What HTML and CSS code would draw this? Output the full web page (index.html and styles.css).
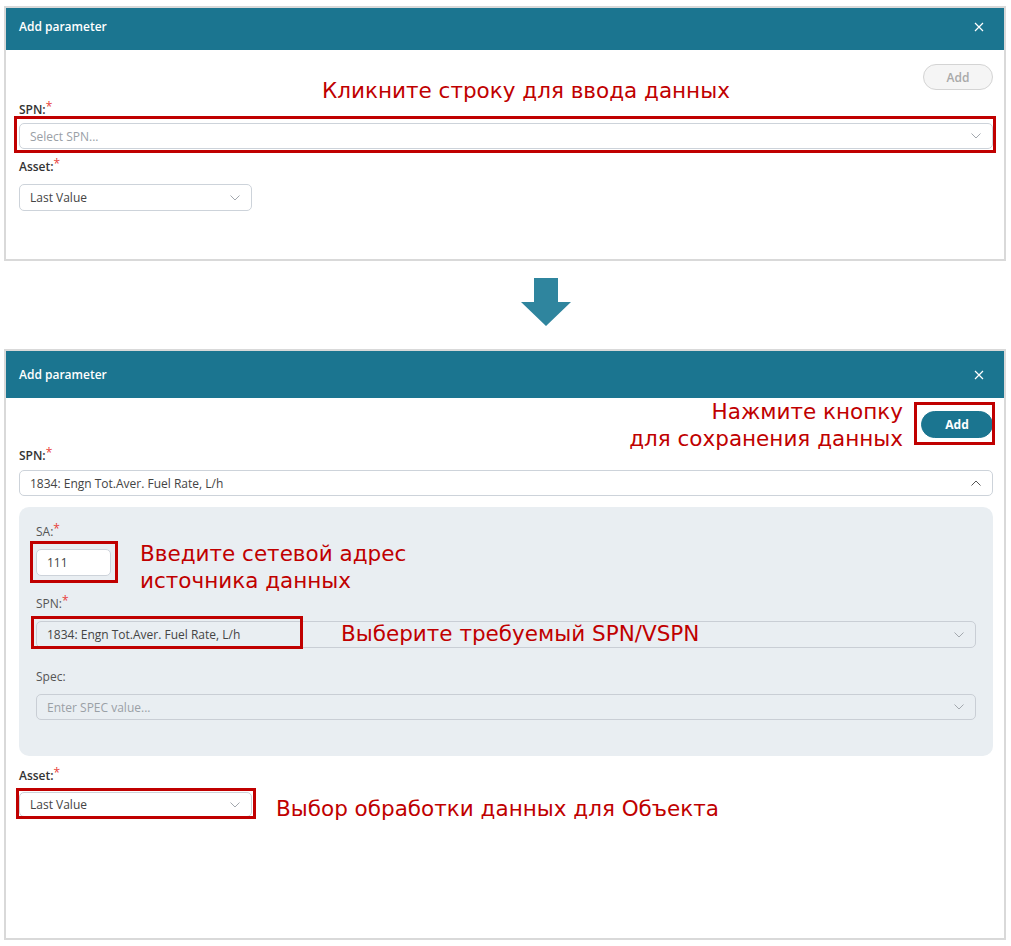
FILE: index.html
```html
<!DOCTYPE html>
<html lang="ru">
<head>
<meta charset="utf-8">
<title>Add parameter</title>
<link rel="stylesheet" href="styles.css">
</head>
<body>
<main class="page">

  <section class="dialog dialog-1">
    <header class="dlg-head dlg-head-1">
      <h2 class="dlg-title">Add parameter</h2>
      <svg class="dlg-close" viewBox="0 0 10 10"><path d="M1 1L9 9M9 1L1 9"/></svg>
    </header>
    <div class="dlg-body dlg-body-1">
      <div class="actions">
        <button class="btn btn-disabled btn-1">Add</button>
      </div>
      <div class="field-label lbl-spn1">SPN:<span class="req">*</span></div>
      <div class="select select-1 mark mark-spn1">
        <span class="placeholder">Select SPN...</span>
        <svg class="chev" viewBox="0 0 10 6"><path d="M0.5 0.5L5 5L9.5 0.5"/></svg>
      </div>
      <div class="field-label lbl-asset1">Asset:<span class="req">*</span></div>
      <div class="select select-asset select-asset1">
        <span class="value">Last Value</span>
        <svg class="chev" viewBox="0 0 10 6"><path d="M0.5 0.5L5 5L9.5 0.5"/></svg>
      </div>
    </div>
    <p class="note note-1">Кликните строку для ввода данных</p>
  </section>

  <div class="flow-arrow">
    <svg class="arrow" viewBox="0 0 50 48"><polygon points="13,0 37,0 37,24 50,24 25,48 0,24 13,24"/></svg>
  </div>

  <section class="dialog dialog-2">
    <header class="dlg-head dlg-head-2">
      <h2 class="dlg-title">Add parameter</h2>
      <svg class="dlg-close" viewBox="0 0 10 10"><path d="M1 1L9 9M9 1L1 9"/></svg>
    </header>
    <div class="dlg-body dlg-body-2">
      <div class="actions">
        <button class="btn btn-primary btn-2 mark mark-add">Add</button>
      </div>
      <div class="field-label lbl-spn2">SPN:<span class="req">*</span></div>
      <div class="select select-2">
        <span class="value">1834: Engn Tot.Aver. Fuel Rate, L/h</span>
        <svg class="chev chev-up" viewBox="0 0 10 6"><path d="M0.5 5.5L5 1L9.5 5.5"/></svg>
      </div>

      <div class="subform">
        <div class="field-label sub-label lbl-sa">SA:<span class="req">*</span></div>
        <div class="input-sa mark mark-sa">111</div>

        <div class="field-label sub-label lbl-sub-spn">SPN:<span class="req">*</span></div>
        <div class="select select-disabled select-sub-spn mark mark-sub-spn">
          <span class="value">1834: Engn Tot.Aver. Fuel Rate, L/h</span>
          <svg class="chev" viewBox="0 0 10 6"><path d="M0.5 0.5L5 5L9.5 0.5"/></svg>
        </div>

        <div class="field-label sub-label lbl-spec">Spec:</div>
        <div class="select select-disabled select-spec">
          <span class="placeholder">Enter SPEC value...</span>
          <svg class="chev" viewBox="0 0 10 6"><path d="M0.5 0.5L5 5L9.5 0.5"/></svg>
        </div>
      </div>

      <div class="field-label lbl-asset2">Asset:<span class="req">*</span></div>
      <div class="select select-asset select-asset2 mark mark-asset">
        <span class="value">Last Value</span>
        <svg class="chev" viewBox="0 0 10 6"><path d="M0.5 0.5L5 5L9.5 0.5"/></svg>
      </div>
    </div>
    <p class="note note-add">Нажмите кнопку<br>для сохранения данных</p>
    <p class="note note-sa">Введите сетевой адрес<br>источника данных</p>
    <p class="note note-spn">Выберите требуемый SPN/VSPN</p>
    <p class="note note-asset">Выбор обработки данных для Объекта</p>
  </section>

</main>
</body>
</html>
```

FILE: styles.css
```css
*, *::before, *::after { box-sizing: border-box; }

html, body {
  margin: 0;
  padding: 0;
  background: #ffffff;
}

body {
  font-family: "Open Sans", "Liberation Sans", Arial, sans-serif;
  font-size: 12px;
  color: #333;
}

.page {
  width: 1011px;
  padding: 6px 5px 0 4px;
}

/* ---------- dialog ---------- */
.dialog {
  position: relative;
  width: 1002px;
  border: 2px solid #d9d9d9;
  background: #fff;
}
.dialog-1 { height: 255px; }
.dialog-2 { height: 591px; }

.dlg-head {
  display: flex;
  align-items: center;
  justify-content: space-between;
  background: #1b7590;
  color: #fff;
  padding: 0 20px 0 13px;
}
.dlg-head-1 { height: 42px; padding-bottom: 5px; }
.dlg-head-2 { height: 47px; }

.dlg-title {
  margin: 0;
  font-size: 12px;
  font-weight: 600;
  line-height: 16px;
}

.dlg-close {
  width: 10px;
  height: 10px;
  fill: none;
  stroke: #fff;
  stroke-width: 1.2;
}

.dlg-body {
  padding: 14px 11px 0 13px;
}
.dlg-body-2 { padding-top: 13px; }

.actions {
  display: flex;
  justify-content: flex-end;
}

.btn {
  font-family: "Open Sans", "Liberation Sans", Arial, sans-serif;
  font-size: 12px;
  border-radius: 14px;
  padding: 0;
  cursor: pointer;
}
.btn-1 { width: 70px; height: 26px; }
.btn-2 { width: 72px; height: 27px; }

.btn-disabled {
  background: #f5f5f5;
  border: 1px solid #d4d4d4;
  color: #a9a9a9;
  font-weight: 600;
}
.btn-primary {
  background: #1b7590;
  border: 1px solid #1b7590;
  color: #fff;
  font-weight: 700;
}

/* ---------- fields ---------- */
.field-label {
  line-height: 16px;
  font-weight: 600;
  color: #333;
}
.sub-label {
  font-weight: 400;
  color: #555;
}
.req {
  color: #e8413a;
  font-weight: 400;
  vertical-align: 3px;
  line-height: 0;
}

.select {
  display: flex;
  align-items: center;
  justify-content: space-between;
  height: 26px;
  border: 1px solid #cdd3da;
  border-radius: 5px;
  background: #fff;
  padding: 0 11px 0 10px;
  color: #444;
}
.select-disabled { background: #e9eef2; border-color: #c9ced5; }

.placeholder { color: #9aa0a6; }
.value { color: #444; }

.chev {
  width: 10px;
  height: 6px;
  fill: none;
  stroke: #a3a8ae;
  stroke-width: 1;
}
.chev-up { stroke: #555; }

.select-asset { width: 233px; }

/* panel 1 spacing */
.lbl-spn1 { margin-top: 12px; }
.select-1 { margin-top: 5px; }
.lbl-asset1 { margin-top: 10px; }
.select-asset1 { margin-top: 9px; height: 27px; }

/* panel 2 spacing */
.lbl-spn2 { margin-top: 10px; }
.select-2 { margin-top: 6px; }

.subform {
  margin-top: 11px;
  background: #e9eef2;
  border-radius: 10px;
  padding: 17px 17px 36px 17px;
}

.input-sa {
  margin-top: 9px;
  width: 75px;
  height: 27px;
  line-height: 25px;
  border: 1px solid #cdd3da;
  border-radius: 5px;
  background: #fff;
  padding-left: 10px;
  color: #444;
}

.lbl-sub-spn { margin-top: 20px; }
.select-sub-spn { margin-top: 9px; height: 27px; }
.lbl-spec { margin-top: 21px; }
.select-spec { margin-top: 9px; }

.lbl-asset2 { margin-top: 12px; }
.select-asset2 { margin-top: 8px; height: 25px; }

/* ---------- annotation overlays ---------- */
.mark { position: relative; }
.mark::after {
  content: "";
  position: absolute;
  border: 3px solid #c00000;
  pointer-events: none;
}
.mark-spn1::after  { top: -8px; left: -6px; right: -4px; bottom: -5px; }
.mark-add::after   { top: -10px; left: -8px; right: -3px; bottom: -8px; }
.mark-sa::after    { top: -9px; left: -7px; right: -8px; bottom: -8px; }
.mark-sub-spn::after { top: -6px; left: -6px; width: 272px; bottom: -2px; }
.mark-asset::after { top: -5px; left: -4px; right: -5px; bottom: -3px; }

.note {
  position: absolute;
  margin: 0;
  font-family: "DejaVu Sans", Verdana, sans-serif;
  font-size: 21.5px;
  line-height: 27px;
  color: #c00000;
  white-space: nowrap;
}
.note-1     { top: 69px;  left: 316px; }
.note-add   { top: 47px;  right: 101px; text-align: right; }
.note-sa    { top: 189px; left: 134px; }
.note-spn   { top: 269px; left: 335px; }
.note-asset { top: 444px; left: 270px; }

/* ---------- flow arrow ---------- */
.flow-arrow {
  display: flex;
  margin: 17px 0 23px;
  padding-left: 517px;
}
.arrow {
  width: 50px;
  height: 48px;
  fill: #2f859e;
}
```
